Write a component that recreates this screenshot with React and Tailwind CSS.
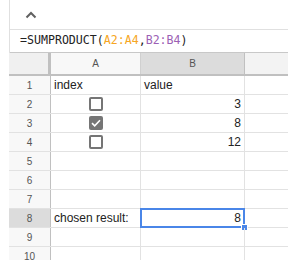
import React from 'react';

const rows = [
  { n: 1, a: 'index', b: 'value' },
  { n: 2, box: 'off', b: '3' },
  { n: 3, box: 'on', b: '8' },
  { n: 4, box: 'off', b: '12' },
  { n: 5 },
  { n: 6 },
  { n: 7 },
  { n: 8, a: 'chosen result:', b: '8', selected: true },
  { n: 9 },
  { n: 10 },
];

const Checkbox = ({ checked }) =>
  checked ? (
    <span className="grid h-[14px] w-[14px] place-items-center rounded-[2px] bg-[#757575]">
      <svg width="10" height="8" viewBox="0 0 10 8" fill="none">
        <path d="M1 4.2 3.7 6.8 9 1.3" stroke="white" strokeWidth="1.6" />
      </svg>
    </span>
  ) : (
    <span className="h-[14px] w-[14px] rounded-[2px] border-2 border-[#757575] bg-white" />
  );

export default function App() {
  return (
    <div className="relative h-[260px] w-[288px] overflow-hidden bg-white font-['Liberation_Sans',Arial,sans-serif]">
      {/* Toolbar + formula */}
      <div className="ml-[9px] border-l border-[#e0e0e0]">
        <div className="flex h-[30px] items-center border-b border-[#e0e0e0] pl-[15px]">
          <svg width="12" height="8" viewBox="0 0 12 8" fill="none">
            <path d="M1.5 6.5 6 2l4.5 4.5" stroke="#616161" strokeWidth="2" />
          </svg>
        </div>
        <div className="flex h-[23px] items-center border-b border-[#c8c8c8] pl-[10px] font-['DejaVu_Sans_Mono',monospace] text-[11.6px] text-[#222]">
          =SUMPRODUCT(<span className="text-[#f6a623]">A2:A4</span>,<span className="text-[#9c5fb5]">B2:B4</span>)
        </div>
      </div>

      {/* Grid */}
      <div className="ml-[9px]">
        <div className="flex h-[23px] border-b-2 border-[#c0c0c0] text-[10px] text-[#555]">
          <div className="w-[42px] shrink-0 border-r-[3px] border-[#c0c0c0] bg-[#f0f0f0]" />
          <div className="flex w-[90px] shrink-0 items-center justify-center border-r border-[#d0d0d0] bg-[#f8f8f8]">A</div>
          <div className="flex w-[104px] shrink-0 items-center justify-center border-r border-[#c0c0c0] bg-[#dcdcdc]">B</div>
          <div className="flex-1 bg-[#f3f3f3]" />
        </div>
        {rows.map((r) => (
          <div key={r.n} className="flex h-[19px] border-b border-[#e2e2e2] text-[12px] text-[#222]">
            <div
              className={`flex w-[42px] shrink-0 items-center justify-center border-r border-[#c0c0c0] text-[10px] text-[#555] ${
                r.selected ? 'bg-[#dcdcdc]' : 'bg-[#f8f8f8]'
              }`}
            >
              {r.n}
            </div>
            <div className={`flex w-[90px] shrink-0 items-center border-r border-[#e2e2e2] px-[3px] ${r.box ? 'justify-center' : ''}`}>
              {r.box ? <Checkbox checked={r.box === 'on'} /> : r.a}
            </div>
            <div
              className={`relative flex w-[104px] shrink-0 items-center border-r border-[#e2e2e2] px-[3px] ${
                r.n === 1 ? 'justify-start' : 'justify-end'
              }`}
            >
              {r.b}
              {r.selected && (
                <>
                  <div className="absolute -left-[1px] -top-[1px] bottom-[-1px] right-[-1px] border-2 border-[#4a86e8]" />
                  <div className="absolute bottom-[-4px] right-[-4px] h-[7px] w-[7px] border border-white bg-[#4a86e8]" />
                </>
              )}
            </div>
            <div className="flex-1" />
          </div>
        ))}
      </div>
    </div>
  );
}
